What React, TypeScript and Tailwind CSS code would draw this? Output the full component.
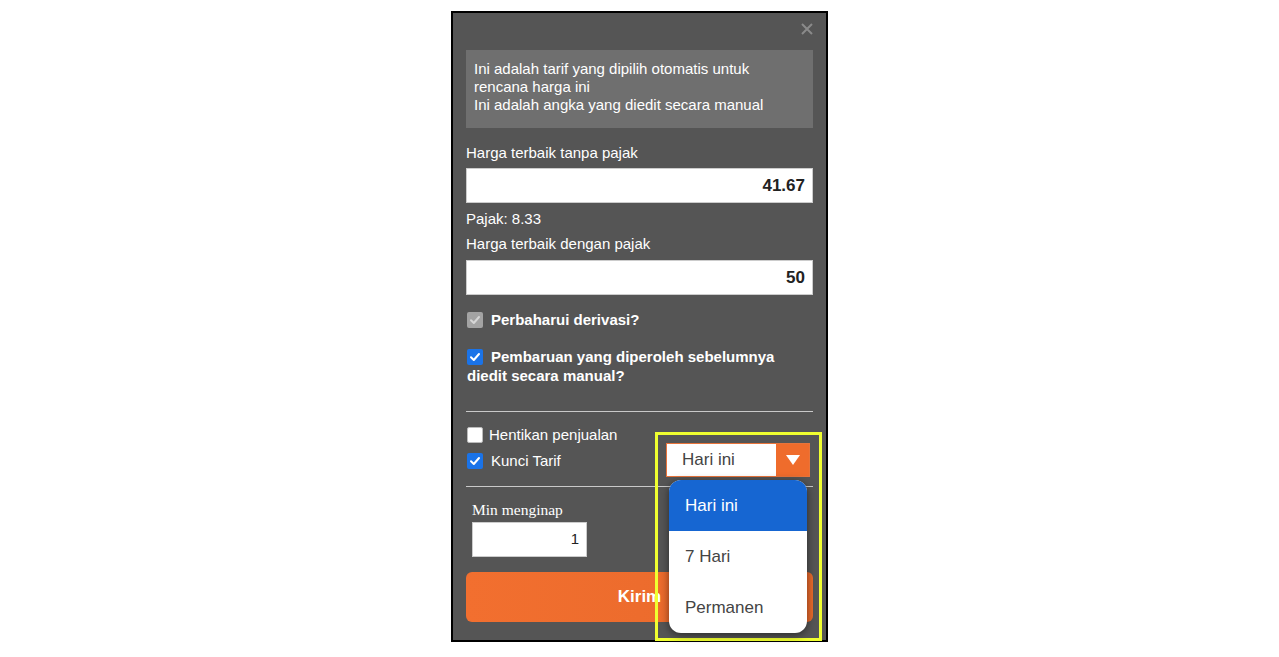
import React from "react";

const sans = { fontFamily: '"Liberation Sans", Arial, sans-serif' };

const CheckBox = ({ state }: { state: "on" | "off" | "disabled" }) => {
  if (state === "off") {
    return <span className="inline-block w-[16px] h-[16px] shrink-0 rounded-[2px] bg-white border border-[#bbb]" />;
  }
  const bg = state === "on" ? "bg-[#1a73e8]" : "bg-[#a3a3a3]";
  const stroke = state === "on" ? "#ffffff" : "#d6d6d6";
  return (
    <span className={`inline-flex items-center justify-center w-[16px] h-[16px] shrink-0 rounded-[2px] ${bg}`}>
      <svg width="12" height="12" viewBox="0 0 12 12">
        <path d="M2 6.3 L4.8 9 L10 3" fill="none" stroke={stroke} strokeWidth="2" strokeLinecap="round" strokeLinejoin="round" />
      </svg>
    </span>
  );
};

const App = () => {
  return (
    <div className="min-h-screen bg-white flex justify-center items-start pt-[11px]" style={sans}>
      <div className="relative w-[377px] border-2 border-black bg-[#555555] px-[13px] pb-[18px] text-white">
        {/* close */}
        <div className="h-[37px] flex items-start justify-end pt-[10px]">
          <svg width="12" height="12" viewBox="0 0 12 12">
            <path d="M1 1 L11 11 M11 1 L1 11" stroke="#8a8a8a" strokeWidth="2" />
          </svg>
        </div>

        {/* info */}
        <div className="h-[78px] bg-[#6f6f6f] pt-[10px] px-[8px] text-[15px] leading-[18px]">
          Ini adalah tarif yang dipilih otomatis untuk
          <br />
          rencana harga ini
          <br />
          Ini adalah angka yang diedit secara manual
        </div>

        <div className="mt-[16px] text-[15px] leading-[18px]">Harga terbaik tanpa pajak</div>
        <div className="mt-[6px] h-[35px] bg-white border border-[#ccc] flex items-center justify-end pr-[7px] text-[17px] font-bold text-[#222]">
          41.67
        </div>

        <div className="mt-[7px] text-[15px] leading-[18px]">Pajak: 8.33</div>
        <div className="mt-[7px] text-[15px] leading-[18px]">Harga terbaik dengan pajak</div>
        <div className="mt-[7px] h-[35px] bg-white border border-[#ccc] flex items-center justify-end pr-[7px] text-[17px] font-bold text-[#222]">
          50
        </div>

        <div className="mt-[16px] flex items-center gap-[8px] pl-[1px] h-[18px] text-[15px] font-bold">
          <CheckBox state="disabled" />
          Perbaharui derivasi?
        </div>

        <div className="mt-[18px] pl-[1px] text-[15px] leading-[19px] font-bold">
          <div className="flex items-center gap-[8px] h-[19px]">
            <CheckBox state="on" />
            Pembaruan yang diperoleh sebelumnya
          </div>
          <div className="h-[19px]">diedit secara manual?</div>
        </div>

        <div className="mt-[26px] h-px bg-[#c9c9c9]" />

        <div className="flex justify-between">
          <div className="pt-[14px] flex flex-col gap-[8px] text-[15px] pl-[1px]">
            <div className="flex items-center gap-[6px] h-[18px]">
              <CheckBox state="off" />
              Hentikan penjualan
            </div>
            <div className="flex items-center gap-[8px] h-[18px]">
              <CheckBox state="on" />
              Kunci Tarif
            </div>
          </div>
          <div className="pt-[31px] mr-[3px]">
            <div className="flex h-[34px] w-[144px] border border-[#e8743b] bg-white">
              <div className="flex-1 flex items-center pl-[15px] text-[17px] text-[#444]">Hari ini</div>
              <div className="w-[33px] bg-[#ef6c2c] flex items-center justify-center">
                <svg width="16" height="12" viewBox="0 0 16 12">
                  <path d="M1 1 H15 L8 11 Z" fill="#ffffff" />
                </svg>
              </div>
            </div>
          </div>
        </div>

        <div className="mt-[9px] h-px bg-[#c9c9c9]" />

        <div className="pl-[6px]">
          <div className="mt-[14px] h-[18px] text-[15.5px] leading-[18px]" style={{ fontFamily: '"Liberation Serif", "Times New Roman", serif' }}>
            Min menginap
          </div>
          <div className="mt-[3px] w-[115px] h-[35px] bg-white border border-[#ccc] flex items-center justify-end pr-[7px] text-[15px] text-[#222]">
            1
          </div>
        </div>

        <button className="block mt-[15px] w-full h-[50px] rounded-[6px] bg-gradient-to-r from-[#f26f2f] to-[#e8692b] text-white text-[17px] font-bold">
          Kirim
        </button>

        {/* highlight frame */}
        <div className="absolute left-[202px] top-[419px] w-[167px] h-[209px] border-[3px] border-[#f0ff30]" />

        {/* open dropdown menu */}
        <div className="absolute left-[216px] top-[467px] w-[138px] h-[153px] bg-white rounded-[12px] shadow-[0_2px_8px_rgba(0,0,0,0.5)] overflow-hidden text-[17px]">
          <div className="h-[51px] bg-[#1666d2] flex items-center pl-[16px] text-white">Hari ini</div>
          <div className="h-[51px] flex items-center pl-[16px] text-[#444]">7 Hari</div>
          <div className="h-[51px] flex items-center pl-[16px] text-[#444]">Permanen</div>
        </div>
      </div>
    </div>
  );
};

export default App;
